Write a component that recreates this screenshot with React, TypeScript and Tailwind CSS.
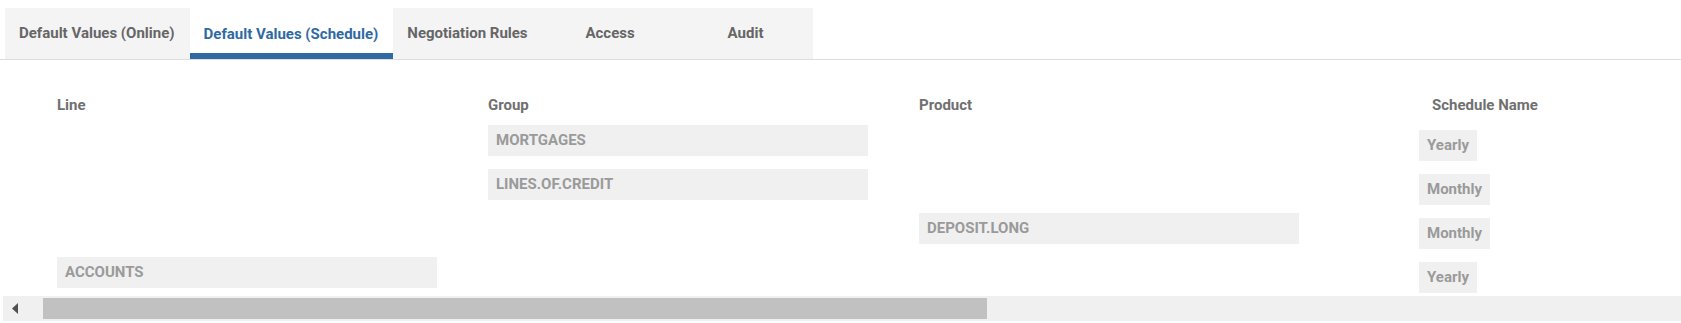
import React from "react";

const tabs = [
  { label: "Default Values (Online)", cls: "pl-[14px] pr-[15px]" },
  { label: "Default Values (Schedule)", cls: "pl-[14px] pr-[15px]", active: true },
  { label: "Negotiation Rules", cls: "px-[14px]" },
  { label: "Access", cls: "w-[137px] justify-center" },
  { label: "Audit", cls: "w-[134px] justify-center" },
];

type Row = { line?: string; group?: string; product?: string; schedule: string };
const rows: Row[] = [
  { group: "MORTGAGES", schedule: "Yearly" },
  { group: "LINES.OF.CREDIT", schedule: "Monthly" },
  { product: "DEPOSIT.LONG", schedule: "Monthly" },
  { line: "ACCOUNTS", schedule: "Yearly" },
];

function Cell({ value }: { value?: string }) {
  return (
    <div className="w-[431px] shrink-0">
      {value ? (
        <div className="w-[380px] h-[31px] bg-[#f0f0f0] flex items-center px-2 text-[15px] font-bold text-[#9a9a9a]">
          {value}
        </div>
      ) : null}
    </div>
  );
}

export default function App() {
  return (
    <div
      className="w-[1681px] h-[323px] bg-white overflow-hidden flex flex-col"
      style={{ fontFamily: "Roboto, 'Liberation Sans', sans-serif" }}
    >
      <div className="pt-[8px] pl-[5px] border-b border-[#dddddd] flex">
        {tabs.map((t) => (
          <div
            key={t.label}
            className={
              "h-[51px] flex items-center text-[15px] font-bold " +
              t.cls +
              (t.active
                ? " bg-white text-[#2f6aa3] shadow-[inset_0_-6px_0_#2f6aa3] pt-[1px]"
                : " bg-[#f4f4f4] text-[#666666]")
            }
          >
            {t.label}
          </div>
        ))}
      </div>

      <div className="h-[236px] pt-[35px] pl-[57px]">
        <div className="flex h-[30px] text-[15px] font-bold text-[#707070] leading-[20px]">
          <div className="w-[431px] shrink-0">Line</div>
          <div className="w-[431px] shrink-0">Group</div>
          <div className="w-[431px] shrink-0">Product</div>
          <div className="pl-[82px]">Schedule Name</div>
        </div>
        <div className="flex flex-col gap-[8px]">
          {rows.map((r, i) => (
            <div key={i} className="flex items-start h-[36px]">
              <Cell value={r.line} />
              <Cell value={r.group} />
              <Cell value={r.product} />
              <div className="pl-[69px] pt-[5px]">
                <div className="h-[31px] bg-[#f0f0f0] flex items-center px-2 text-[15px] font-bold text-[#9a9a9a]">
                  {r.schedule}
                </div>
              </div>
            </div>
          ))}
        </div>
      </div>

      <div className="pl-[3px]">
        <div className="h-[25px] bg-[#f0f0f0] flex items-center">
          <div className="w-[40px] h-full flex items-center pl-[9px]">
            <svg width="6" height="11" viewBox="0 0 6 11">
              <polygon points="6,0 0,5.5 6,11" fill="#505050" />
            </svg>
          </div>
          <div className="w-[944px] h-[21px] bg-[#c1c1c1]" />
        </div>
      </div>
    </div>
  );
}
